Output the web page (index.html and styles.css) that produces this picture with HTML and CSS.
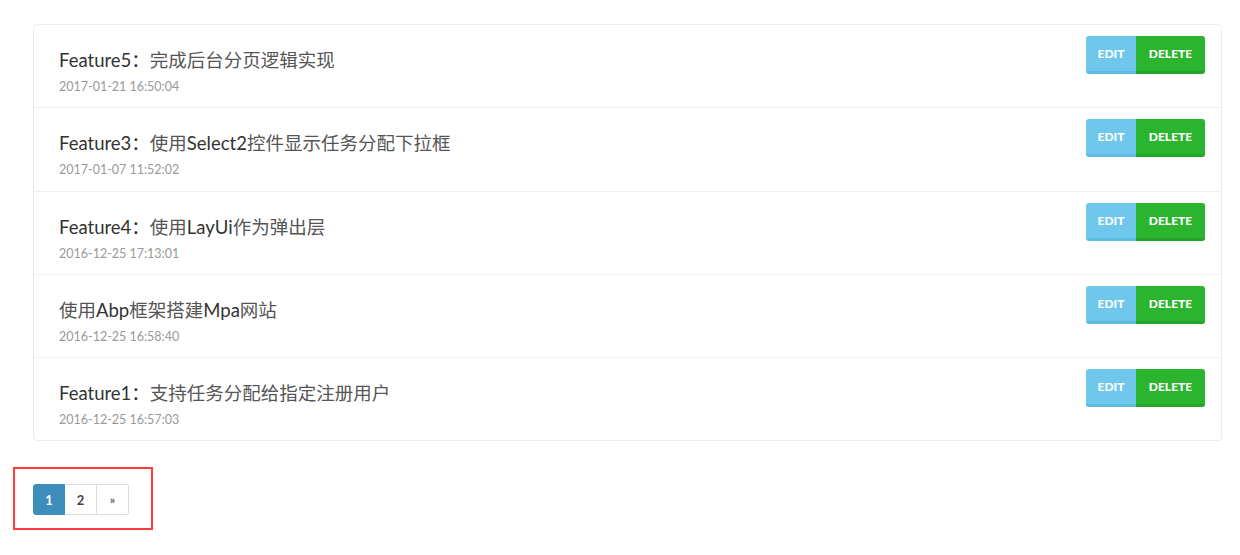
FILE: index.html
```html
<!DOCTYPE html>
<html lang="zh">
<head>
<meta charset="utf-8">
<title>Tasks</title>
<link rel="stylesheet" href="styles.css">
</head>
<body>
<div class="page">
  <ul class="task-list">
    <li class="task">
      <div class="task-text">
        <div class="task-title">Feature5：<span class="zh">完成后台分页逻辑实现</span></div>
        <div class="task-date">2017-01-21 16:50:04</div>
      </div>
      <div class="btn-group"><button class="btn btn-edit">Edit</button><button class="btn btn-delete">Delete</button></div>
    </li>
    <li class="task">
      <div class="task-text">
        <div class="task-title">Feature3：<span class="zh">使用</span>Select2<span class="zh">控件显示任务分配下拉框</span></div>
        <div class="task-date">2017-01-07 11:52:02</div>
      </div>
      <div class="btn-group"><button class="btn btn-edit">Edit</button><button class="btn btn-delete">Delete</button></div>
    </li>
    <li class="task">
      <div class="task-text">
        <div class="task-title">Feature4：<span class="zh">使用</span>LayUi<span class="zh">作为弹出层</span></div>
        <div class="task-date">2016-12-25 17:13:01</div>
      </div>
      <div class="btn-group"><button class="btn btn-edit">Edit</button><button class="btn btn-delete">Delete</button></div>
    </li>
    <li class="task">
      <div class="task-text">
        <div class="task-title"><span class="zh">使用</span>Abp<span class="zh">框架搭建</span>Mpa<span class="zh">网站</span></div>
        <div class="task-date">2016-12-25 16:58:40</div>
      </div>
      <div class="btn-group"><button class="btn btn-edit">Edit</button><button class="btn btn-delete">Delete</button></div>
    </li>
    <li class="task">
      <div class="task-text">
        <div class="task-title">Feature1：<span class="zh">支持任务分配给指定注册用户</span></div>
        <div class="task-date">2016-12-25 16:57:03</div>
      </div>
      <div class="btn-group"><button class="btn btn-edit">Edit</button><button class="btn btn-delete">Delete</button></div>
    </li>
  </ul>
  <div class="highlight">
    <ul class="pagination">
      <li class="page-item active">1</li>
      <li class="page-item">2</li>
      <li class="page-item next">»</li>
    </ul>
  </div>
</div>
</body>
</html>
```

FILE: styles.css
```css
html, body {
  margin: 0;
  padding: 0;
  background: #ffffff;
}
body {
  font-family: "Lato", "Noto Sans CJK SC", sans-serif;
  color: #333;
}
.page {
  padding: 24px 18px 0 13px;
}
.task-list {
  list-style: none;
  margin: 0 0 0 20px;
  padding: 0;
  border: 1px solid #ececec;
  border-radius: 4px;
}
.task {
  display: flex;
  justify-content: space-between;
  align-items: flex-start;
  height: 82.25px;
  padding: 0 16px 0 25px;
  border-top: 1px solid #efefef;
}
.task:first-child {
  border-top: none;
}
.task-text {
  padding-top: 22px;
}
.task-title {
  font-size: 18.5px;
  line-height: 26px;
  color: #333;
}
.task-title .zh {
  color: #555;
}
.task-date {
  margin-top: 5px;
  font-size: 12.5px;
  line-height: 18px;
  color: #999;
}
.btn-group {
  display: flex;
  margin-top: 11px;
}
.btn {
  font-family: "Lato", sans-serif;
  font-weight: 900;
  font-size: 12px;
  text-transform: uppercase;
  color: #fff;
  border: none;
  height: 38px;
  padding: 0;
  margin: 0;
  cursor: pointer;
}
.btn-edit {
  width: 50px;
  background: #6fc8eb;
  border-bottom: 3px solid #5cbbe2;
  border-radius: 3px 0 0 3px;
}
.btn-delete {
  width: 69px;
  background: #2bb52f;
  border-bottom: 3px solid #24a428;
  border-radius: 0 3px 3px 0;
}
.highlight {
  display: inline-block;
  margin-top: 26px;
  border: 2px solid #ff3b3b;
  padding: 15px 22px 13px 18px;
}
.pagination {
  list-style: none;
  margin: 0;
  padding: 0;
  display: flex;
}
.page-item {
  width: 32px;
  height: 31px;
  box-sizing: border-box;
  display: flex;
  align-items: center;
  justify-content: center;
  font-size: 13px;
  font-weight: 700;
  color: #444;
  border: 1px solid #ddd;
  border-left: none;
  background: #fff;
}
.page-item:first-child {
  border-left: 1px solid #ddd;
  border-radius: 3px 0 0 3px;
}
.page-item:last-child {
  border-radius: 0 3px 3px 0;
}
.page-item.active {
  background: #3c8dbc;
  border-color: #3c8dbc;
  color: #fff;
}
.page-item.next {
  font-weight: 700;
  font-size: 12px;
  color: #666;
}
```
